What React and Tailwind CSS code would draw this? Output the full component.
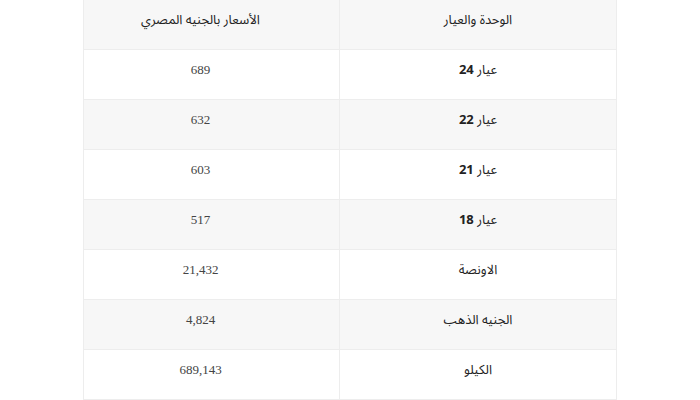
import React from 'react'

// Gold prices table (RTL)
const rows = [
  { unit: 'عيار', karat: '24', price: '689' },
  { unit: 'عيار', karat: '22', price: '632' },
  { unit: 'عيار', karat: '21', price: '603' },
  { unit: 'عيار', karat: '18', price: '517' },
  { unit: 'الاونصة', price: '21,432' },
  { unit: 'الجنيه الذهب', price: '4,824' },
  { unit: 'الكيلو', price: '689,143' },
]

export default function App() {
  return (
    <div className="w-[700px] h-[400px] bg-white overflow-hidden">
      <table dir="rtl" className="mx-auto w-[534px] border-collapse font-['Noto_Sans_Arabic','DejaVu_Sans',sans-serif] text-[#222]">
        <thead>
          <tr className="bg-[#f7f7f7]">
            <th className="w-[277px] h-[49px] align-top pt-[10px] border border-[#ededed] border-t-0 text-[13px] font-normal leading-[20px]">
              الوحدة والعيار
            </th>
            <th className="h-[49px] align-top pt-[10px] pr-[22px] border border-[#ededed] border-t-0 text-[13px] font-normal leading-[20px]">
              الأسعار بالجنيه المصري
            </th>
          </tr>
        </thead>
        <tbody>
          {rows.map((r, i) => (
            <tr key={i} className={i % 2 === 1 ? 'bg-[#f7f7f7]' : 'bg-white'}>
              <td className="h-[50px] align-top pt-[10px] border border-[#ededed] text-center text-[13px] leading-[20px]">
                {r.unit}
                {r.karat && <span className="font-bold text-[13px]"> {r.karat}</span>}
              </td>
              <td className="h-[50px] align-top pt-[10px] pr-[22px] border border-[#ededed] text-center text-[13px] leading-[20px] text-[#444] font-['Liberation_Serif',serif]">
                {r.price}
              </td>
            </tr>
          ))}
        </tbody>
      </table>
    </div>
  )
}
